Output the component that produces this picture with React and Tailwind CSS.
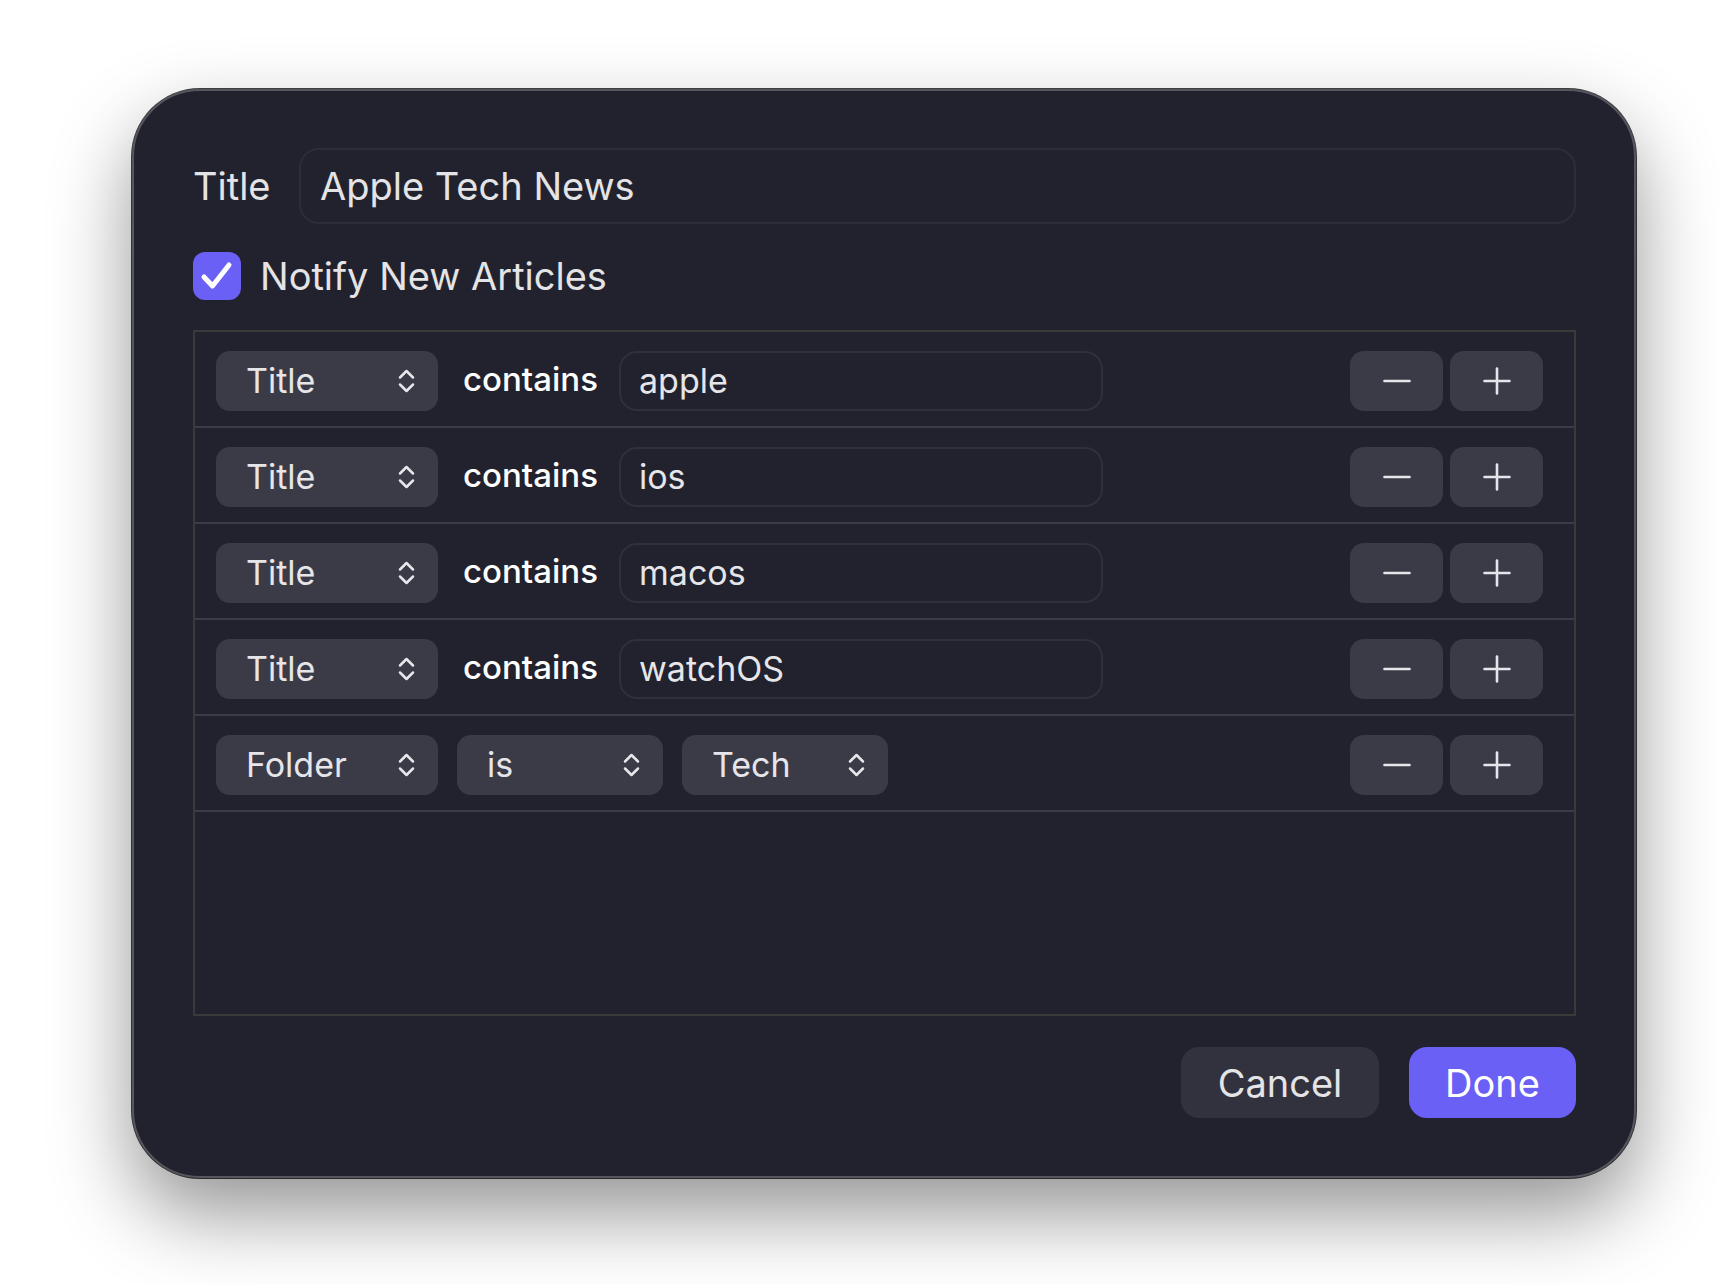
import React from "react";

const Chevrons = () => (
  <svg width="19" height="26" viewBox="0 0 19 26" fill="none" stroke="#e6e6ea" strokeWidth="2.5" strokeLinecap="round" strokeLinejoin="round">
    <path d="M3 9.5 L9.5 3 L16 9.5" />
    <path d="M3 16.5 L9.5 23 L16 16.5" />
  </svg>
);

const Select = ({ label, w = "w-[222px]", className = "" }) => (
  <div className={`${w} ${className} h-[60px] shrink-0 rounded-[14px] bg-[#3a3b47] pl-[30px] pr-[22px] flex items-center justify-between text-[34px] leading-none text-[#e6e6ea]`}>
    <span>{label}</span>
    <Chevrons />
  </div>
);

const StepButtons = () => (
  <div className="ml-auto flex gap-[7px]">
    <button className="w-[93px] h-[60px] rounded-[14px] bg-[#3a3b47] flex items-center justify-center">
      <svg width="28" height="28" viewBox="0 0 28 28" stroke="#e6e6ea" strokeWidth="2.6" strokeLinecap="round">
        <path d="M1.5 14 H26.5" />
      </svg>
    </button>
    <button className="w-[93px] h-[60px] rounded-[14px] bg-[#3a3b47] flex items-center justify-center">
      <svg width="28" height="28" viewBox="0 0 28 28" stroke="#e6e6ea" strokeWidth="2.6" strokeLinecap="round">
        <path d="M1.5 14 H26.5 M14 1.5 V26.5" />
      </svg>
    </button>
  </div>
);

const TextRule = ({ value }) => (
  <div className="h-[96px] border-b-2 border-[#3b3c46] pt-[4px] pl-[21px] pr-[31px] flex items-center">
    <Select label="Title" />
    <span className="ml-[25px] w-[130px] mb-[4px] text-[33px] leading-none font-medium text-white">contains</span>
    <div className="ml-[26px] w-[484px] h-[60px] rounded-[18px] border-2 border-[#2e303b] pl-[18px] flex items-center text-[34px] leading-none text-[#e6e6ea]">
      {value}
    </div>
    <StepButtons />
  </div>
);

const App = () => {
  const rules = ["apple", "ios", "macos", "watchOS"];
  return (
    <div
      className="min-h-screen bg-white pt-[89px] pl-[132px] pb-[106px]"
      style={{ fontFamily: "Inter, 'Noto Sans', sans-serif" }}
    >
      <div className="w-[1504px] rounded-[68px] bg-[#21222d] border-2 border-[#55565f] shadow-[0_0_0_1px_rgba(0,0,0,0.75),0_36px_80px_rgba(0,0,0,0.42)] pl-[59px] pr-[58px] pt-[57px] pb-[58px] flex flex-col">
        <div className="h-[76px] flex items-center">
          <span className="w-[106px] text-[38px] leading-none text-[#e4e4e7]">Title</span>
          <div className="flex-1 h-[76px] rounded-[20px] border-2 border-[#2b2d38] pl-[19px] flex items-center text-[38px] leading-none text-[#e4e4e7]">
            Apple Tech News
          </div>
        </div>

        <div className="mt-[28px] h-[48px] flex items-center gap-[19px]">
          <div className="w-[48px] h-[48px] rounded-[12px] bg-[#6b60f5] flex items-center justify-center">
            <svg width="48" height="48" viewBox="0 0 48 48" fill="none" stroke="white" strokeWidth="5" strokeLinecap="round" strokeLinejoin="round">
              <path d="M11 25 L19.5 34 L36 13" />
            </svg>
          </div>
          <span className="text-[38px] leading-none text-[#e4e4e7]">Notify New Articles</span>
        </div>

        <div className="mt-[30px] h-[686px] border-2 border-[#3a3a3a] flex flex-col">
          {rules.map((r) => (
            <TextRule key={r} value={r} />
          ))}
          <div className="h-[96px] border-b-2 border-[#3b3c46] pt-[4px] pl-[21px] pr-[31px] flex items-center">
            <Select label="Folder" />
            <Select label="is" w="w-[206px]" className="ml-[19px]" />
            <Select label="Tech" w="w-[206px]" className="ml-[19px]" />
            <StepButtons />
          </div>
        </div>

        <div className="mt-[31px] flex justify-end gap-[30px]">
          <button className="w-[198px] h-[71px] rounded-[18px] bg-[#31323e] text-[38px] leading-none text-[#e4e4e7]">
            Cancel
          </button>
          <button className="w-[167px] h-[71px] rounded-[18px] bg-[#6b60f5] text-[38px] leading-none text-white">
            Done
          </button>
        </div>
      </div>
    </div>
  );
};

export default App;
